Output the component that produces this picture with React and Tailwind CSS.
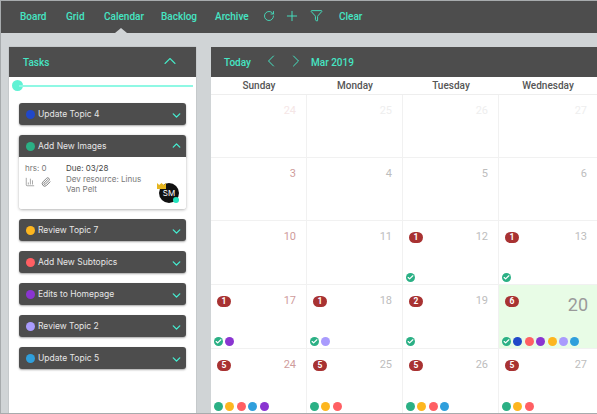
import { RotateCw, Plus, Filter, ChevronUp, ChevronDown, ChevronLeft, ChevronRight, Paperclip, BarChart3, Check } from 'lucide-react'

const GREEN = 'bg-[#2bb085]'
const BLUE = 'bg-[#2148c9]'
const RED = 'bg-[#ff5f63]'
const PURPLE = 'bg-[#8a35d1]'
const YELLOW = 'bg-[#fdb61f]'
const LAVENDER = 'bg-[#a99bfd]'
const SKY = 'bg-[#2f9fdc]'

const tabs = [
  { label: 'Board', cls: 'ml-[19px] w-[46px]' },
  { label: 'Grid', cls: 'w-[38px]' },
  { label: 'Calendar', cls: 'w-[57px]' },
  { label: 'Backlog', cls: 'w-[54px]' },
  { label: 'Archive', cls: 'w-[48px]' },
]

const tasksBefore = [{ name: 'Update Topic 4', color: BLUE }]
const tasksAfter = [
  { name: 'Review Topic 7', color: YELLOW },
  { name: 'Add New Subtopics', color: RED },
  { name: 'Edits to Homepage', color: PURPLE },
  { name: 'Review Topic 2', color: LAVENDER },
  { name: 'Update Topic 5', color: SKY },
]

const rows = [
  {
    h: 'h-[63px]',
    cells: [
      { n: 24, num: 'text-[#f5e6e6]' },
      { n: 25, num: 'text-[#eeeeee]' },
      { n: 26, num: 'text-[#eeeeee]' },
      { n: 27, num: 'text-[#eeeeee]' },
    ],
  },
  {
    h: 'h-[63px]',
    cells: [
      { n: 3, num: 'text-[#cf9c9c]' },
      { n: 4, num: 'text-[#bdbdbd]' },
      { n: 5, num: 'text-[#bdbdbd]' },
      { n: 6, num: 'text-[#bdbdbd]' },
    ],
  },
  {
    h: 'h-[64px]',
    cells: [
      { n: 10, num: 'text-[#cf9c9c]' },
      { n: 11, num: 'text-[#bdbdbd]' },
      { n: 12, num: 'text-[#bdbdbd]', badge: 1, check: true },
      { n: 13, num: 'text-[#bdbdbd]', badge: 1, check: true },
    ],
  },
  {
    h: 'h-[64px]',
    cells: [
      { n: 17, num: 'text-[#cf9c9c]', badge: 1, check: true, dots: [PURPLE] },
      { n: 18, num: 'text-[#bdbdbd]', badge: 1, check: true, dots: [LAVENDER] },
      { n: 19, num: 'text-[#bdbdbd]', badge: 2, check: true },
      { n: 20, today: true, badge: 6, check: true, dots: [BLUE, RED, PURPLE, YELLOW, LAVENDER, SKY] },
    ],
  },
  {
    h: 'h-[65px]',
    cells: [
      { n: 24, num: 'text-[#cf9c9c]', badge: 5, dots: [GREEN, YELLOW, RED, SKY, PURPLE] },
      { n: 25, num: 'text-[#bdbdbd]', badge: 5, dots: [GREEN, YELLOW, RED] },
      { n: 26, num: 'text-[#bdbdbd]', badge: 5, dots: [GREEN, YELLOW, RED, SKY] },
      { n: 27, num: 'text-[#bdbdbd]', badge: 5, dots: [GREEN, YELLOW, RED] },
    ],
  },
]

function TaskBar({ task, open }) {
  const Chevron = open ? ChevronUp : ChevronDown
  return (
    <div className={`h-[22px] bg-[#4d4d4d] flex items-center pl-[7px] pr-[3px] shadow-[0_1px_2px_rgba(0,0,0,0.35)] ${open ? 'rounded-t-[3px]' : 'rounded-[3px]'}`}>
      <span className={`w-[9px] h-[9px] rounded-full ${task.color}`} />
      <span className="ml-[3px] font-['Inter',sans-serif] text-[8.5px] text-[#e6e6e6] flex-1">{task.name}</span>
      <Chevron size={13} strokeWidth={2.5} className={`text-[#45ecd0] ${open ? '-mt-[2px]' : 'mt-[3px]'}`} />
    </div>
  )
}

function DayCell({ cell, width }) {
  return (
    <div className={`${width} relative flex flex-col justify-between border-r border-[#f1f1f1] last:border-r-0 pl-[3px] pb-[2px] ${cell.today ? 'bg-[#e8fce6]' : 'bg-white'}`}>
      <div className="flex justify-between items-start pt-[10px] pl-[3px] pr-[10px]">
        {cell.badge ? (
          <span className="w-[14px] h-[11px] mt-px rounded-full bg-[#a83232] text-white text-[8.5px] font-bold flex items-center justify-center">{cell.badge}</span>
        ) : <span />}
        {cell.today ? (
          <span className="text-[18px] leading-[20px] text-[#9a9a9a] -mr-px">{cell.n}</span>
        ) : (
          <span className={`text-[11px] leading-[11px] ${cell.num}`}>{cell.n}</span>
        )}
      </div>
      <div className="flex gap-[2.4px] h-[9px]">
        {cell.check && (
          <span className={`w-[9px] h-[9px] rounded-full ${GREEN} flex items-center justify-center`}>
            <Check size={7} strokeWidth={4} className="text-white" />
          </span>
        )}
        {(cell.dots || []).map((c, i) => (
          <span key={i} className={`w-[9px] h-[9px] rounded-full ${c}`} />
        ))}
      </div>
    </div>
  )
}

export default function App() {
  const widths = ['w-[96px]', 'w-[96px]', 'w-[96px]', 'flex-1']
  return (
    <div className="w-[597px] h-[414px] overflow-hidden bg-[#d0d4d6] border-t border-l border-b border-[#a7abad] font-['Roboto',sans-serif]">
      {/* Top Navbar */}
      <nav className="relative h-[32px] bg-[#4d4d4d] flex items-center text-[10px] font-medium text-[#45e6c4]">
        {tabs.map((t) => (
          <span key={t.label} className={`${t.cls} shrink-0 -mt-[1px]`}>{t.label}</span>
        ))}
        <RotateCw size={12} strokeWidth={1.7} className="-mt-[3px]" />
        <Plus size={16} strokeWidth={1.4} className="ml-[9px] -mt-[2px]" />
        <Filter size={13} strokeWidth={1.7} className="ml-[10px] -mt-[3px]" />
        <span className="ml-[16px] -mt-[1px]">Clear</span>
        <span className="absolute left-[114px] bottom-0 w-0 h-0 border-x-[6px] border-x-transparent border-b-[5px] border-b-[#d0d4d6]" />
      </nav>

      <div className="flex pl-[8px] pt-[14px]">
        {/* Tasks */}
        <div className="w-[187px] h-[367px] bg-white shrink-0 shadow-[0_0_1px_rgba(0,0,0,0.3)]">
          <div className="h-[30px] bg-[#4d4d4d] flex items-center justify-between pl-[14px] pr-[16px] text-[10px] font-medium text-[#45e6c4]">
            <span>Tasks</span>
            <ChevronUp size={20} strokeWidth={1.3} className="-mt-[2px]" />
          </div>
          <div className="relative h-[26px]">
            <span className="absolute left-[3px] top-[3px] w-[11px] h-[11px] rounded-full bg-[#5ff2d4]" />
            <span className="absolute left-[10px] right-[3px] top-[8px] h-[2px] bg-[#8ff8e4]" />
          </div>
          <div className="flex flex-col gap-[10px] px-[10px]">
            {tasksBefore.map((t) => <TaskBar key={t.name} task={t} />)}
            <div className="rounded-[3px] shadow-[0_1px_3px_rgba(0,0,0,0.3)]">
              <TaskBar task={{ name: 'Add New Images', color: GREEN }} open />
              <div className="relative h-[52px] bg-white rounded-b-[3px] flex pl-[6px] pt-[6px] font-['Inter',sans-serif] text-[8px] leading-[10.5px] text-[#777777]">
                <div className="w-[41px] shrink-0">
                  <div>hrs: 0</div>
                  <div className="flex mt-[3px] text-[#777777]">
                    <BarChart3 size={10} strokeWidth={1.5} />
                    <Paperclip size={10} strokeWidth={2.2} className="ml-[6px]" />
                  </div>
                </div>
                <div className="w-[80px]">
                  <div className="text-[#444444]">Due: 03/28</div>
                  <div>Dev resource: Linus Van Pelt</div>
                </div>
                {/* avatar */}
                <div className="absolute left-[140px] top-[26px] w-[20px] h-[20px] rounded-full bg-[#111111] text-white text-[8px] flex items-center justify-center">SM</div>
                <svg className="absolute left-[138px] top-[26px]" width="9" height="6" viewBox="0 0 9 6">
                  <path d="M0 0l2.2 2L4.5 0l2.3 2L9 0v6H0z" fill="#e5b51f" />
                </svg>
                <span className="absolute left-[154px] top-[40px] w-[6px] h-[6px] rounded-full bg-[#22e3bd]" />
              </div>
            </div>
            {tasksAfter.map((t) => <TaskBar key={t.name} task={t} />)}
          </div>
        </div>

        {/* Calendar */}
        <div className="ml-[15px] flex-1 bg-white">
          <div className="h-[30px] bg-[#4d4d4d] flex items-center pl-[13px] text-[10px] font-medium text-[#45e6c4]">
            <span className="w-[27px]">Today</span>
            <ChevronLeft size={20} strokeWidth={1.2} className="ml-[10px] -mt-[2px]" />
            <ChevronRight size={20} strokeWidth={1.2} className="ml-[5px] -mt-[2px]" />
            <span className="ml-[5px]">Mar 2019</span>
          </div>
          <div className="h-[18px] flex items-center border-b border-[#eeeeee] text-[10px] font-medium text-[#555555]">
            {widths.map((w, i) => (
              <span key={i} className={`${w} text-center`}>{['Sunday', 'Monday', 'Tuesday', 'Wednesday'][i]}</span>
            ))}
          </div>
          {rows.map((row, r) => (
            <div key={r} className={`${row.h} flex border-b border-[#f1f1f1]`}>
              {row.cells.map((c, i) => <DayCell key={i} cell={c} width={widths[i]} />)}
            </div>
          ))}
        </div>
      </div>
    </div>
  )
}
